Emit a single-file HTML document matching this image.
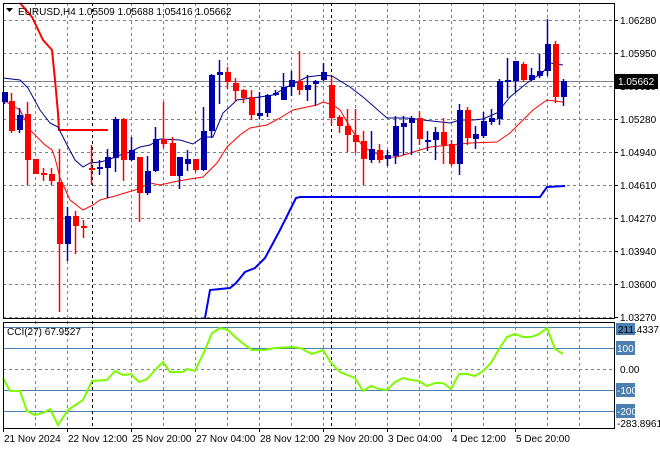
<!DOCTYPE html>
<html><head><meta charset="utf-8"><style>
html,body{margin:0;padding:0;background:#fff;width:660px;height:450px;overflow:hidden}
svg{display:block}
text{font-family:"Liberation Sans",sans-serif;font-size:10px;fill:#000}
</style></head><body>
<svg id="s" width="660" height="450" xmlns="http://www.w3.org/2000/svg">
<g id="grid" stroke="#7a8290" stroke-dasharray="3,3" stroke-width="1"></g>
<g id="lvl" stroke="#4a7fb0" stroke-width="1">
<line x1="3" y1="327.5" x2="614" y2="327.5"/><line x1="3" y1="348.5" x2="614" y2="348.5"/>
<line x1="3" y1="390.5" x2="614" y2="390.5"/><line x1="3" y1="411.5" x2="614" y2="411.5"/>
</g>
<line x1="92.5" y1="3" x2="92.5" y2="428" stroke="#000" stroke-dasharray="3,3"/>
<line x1="331.5" y1="3" x2="331.5" y2="428" stroke="#000" stroke-dasharray="3,3"/>
<line x1="3" y1="81.5" x2="614" y2="81.5" stroke="#7a8290"/>
<polyline fill="none" stroke="#f00" stroke-width="2" points="20,3 32,17 43,40 52,50 55,80 58,113 59,130 108,130"/>
<polyline fill="none" stroke="#0000ee" stroke-width="2" points="205,318 210,290 230,288 236,283 245,272 255,268 265,258 272,245 280,230 290,210 296,198 300,197 540,197 547,187 565,186"/>
<polyline fill="none" stroke="#00008b" stroke-width="1" points="3,78 20,80 28,88 40,110 50,123 58,127 66,143 75,160 83,167 90,163 100,162 108,160 120,155 130,152 140,147 150,145 160,139 180,140 193,144 203,137 213,137 223,113 237,100 260,97 273,95 287,87 307,77 323,75 332,76 350,87 363,97 387,118 407,118 423,120 450,123 460,120 473,120 483,119 497,113 510,97 527,83 543,72 550,63 563,65"/>
<polyline fill="none" stroke="#f00" stroke-width="1" points="3,100 20,110 30,130 45,145 52,150 55,158 60,178 70,200 83,210 93,205 100,200 115,196 125,193 135,190 150,183 160,185 173,182 190,179 203,177 217,163 227,147 240,135 250,128 267,125 280,118 293,110 307,107 317,105 323,102 333,105 340,110 350,127 363,147 383,157 397,157 430,147 470,143 497,142 510,133 523,120 533,110 547,100 563,102"/>
<g id="c"></g>
<polyline fill="none" stroke="#7cfc00" stroke-width="2" points="3,378 10,391 20,391 27,411 35,415 45,412 50,409 58,425 68,410 83,400 92,381 107,380 115,371 123,375 131,374 139,382 147,379 155,370 163,362 170,372 183,372 187,369 195,371 205,350 212,333 220,328 228,330 235,337 245,345 252,350 265,350 275,348 292,347 300,348 312,354 323,350 331,363 340,372 350,376 355,378 363,391 371,386 379,389 387,390 395,382 403,378 411,380 419,381 427,386 435,383 443,383 451,389 459,374 467,374 475,376 483,371 491,363 499,349 507,337 515,334 523,337 531,337 539,334 547,328 555,349 563,354"/>
<g fill="none" stroke="#000" stroke-width="1">
<rect x="3.5" y="3.5" width="611" height="315"/>
<rect x="3.5" y="322.5" width="611" height="106"/>
</g>
<path d="M6,8 L13,8 L9.5,12 Z" fill="#000"/>
<text x="18" y="15">EURUSD,H4  1.05509 1.05688 1.05416 1.05662</text>
<text x="7" y="335">CCI(27) 67.9527</text>
<g id="ax"></g>
<rect x="614" y="74" width="44" height="15" fill="#000"/>
<text x="618" y="85" style="fill:#fff">1.05662</text>
</svg>
<script>
var ns="http://www.w3.org/2000/svg";
function el(p,t,a,txt){var e=document.createElementNS(ns,t);for(var k in a)e.setAttribute(k,a[k]);if(txt)e.textContent=txt;p.appendChild(e);return e;}
var g=document.getElementById('grid');
var vx=[35,67,131,163,195,227,259,291,323,355,387,419,451,483,515,547,579];
vx.forEach(function(x){el(g,'line',{x1:x+.5,y1:3,x2:x+.5,y2:428});});
for(var y=20;y<=317;y+=33)el(g,'line',{x1:3,y1:y+.5,x2:614,y2:y+.5});
el(g,'line',{x1:3,y1:369.5,x2:614,y2:369.5});
var C=[[4,92,102,92,104,'b'],[11,101,131,93,133,'r'],[19,115,130,108,133,'b'],[27,114,160,102,185,'r'],[35,159,174,159,174,'r'],[43,173,175,168,181,'r'],[51,174,181,168,185,'r'],[59,182,244,149,312,'r'],[67,216,244,207,261,'b'],[75,216,226,211,254,'r'],[83,226,228,220,238,'r'],[91,168,170,145,185,'r'],[99,167,169,160,175,'b'],[107,157,168,149,198,'b'],[115,119,158,117,172,'b'],[123,119,160,118,181,'r'],[131,150,160,137,161,'b'],[139,157,193,157,222,'r'],[147,171,193,156,195,'b'],[155,139,171,127,172,'b'],[163,139,144,102,148,'r'],[172,143,176,137,176,'r'],[179,157,176,157,189,'b'],[187,159,164,150,171,'b'],[195,159,170,159,172,'r'],[203,131,170,107,171,'b'],[211,75,131,74,138,'b'],[219,72,75,60,104,'b'],[227,72,82,67,89,'r'],[235,83,91,78,102,'r'],[243,90,98,89,103,'r'],[251,97,115,90,120,'r'],[259,113,116,92,119,'b'],[267,95,113,94,117,'b'],[275,93,95,90,96,'b'],[283,87,100,73,100,'b'],[291,80,87,71,96,'b'],[299,81,90,51,95,'r'],[307,85,90,75,101,'b'],[315,81,84,80,106,'b'],[323,72,80,63,81,'b'],[331,85,118,77,124,'r'],[339,117,126,115,133,'r'],[347,126,135,109,152,'r'],[355,135,142,109,153,'r'],[363,141,159,131,185,'r'],[371,149,160,131,163,'b'],[379,150,160,144,163,'r'],[387,155,159,150,166,'b'],[395,126,156,116,164,'b'],[403,123,127,116,155,'b'],[411,118,123,116,155,'b'],[419,118,139,111,145,'r'],[427,140,142,131,151,'b'],[435,132,140,127,160,'b'],[443,132,145,118,164,'r'],[451,144,164,140,166,'r'],[459,110,164,104,175,'b'],[467,110,138,107,145,'r'],[475,134,139,126,149,'b'],[483,121,136,112,138,'b'],[491,118,122,109,125,'b'],[499,81,119,79,125,'b'],[507,80,82,58,98,'b'],[515,61,81,61,93,'b'],[523,64,80,62,82,'r'],[531,75,80,68,81,'b'],[539,71,76,54,78,'b'],[547,44,71,19,76,'b'],[555,44,97,41,103,'r'],[563,81,97,79,106,'b']];
var cg=document.getElementById('c');
C.forEach(function(c){var col=c[5]=='b'?'#0000a8':'#f00';
el(cg,'line',{x1:c[0]+.5,y1:c[3],x2:c[0]+.5,y2:c[4],stroke:col,'stroke-width':1.5});
el(cg,'rect',{x:c[0]-2,y:c[1],width:6,height:Math.max(2,c[2]-c[1]),fill:col});});
var ax=document.getElementById('ax');
var pl=['1.06280','1.05950','1.05610','1.05280','1.04940','1.04610','1.04270','1.03940','1.03600','1.03270'];
pl.forEach(function(t,i){var y=20+33*i;el(ax,'line',{x1:614,y1:y+.5,x2:618,y2:y+.5,stroke:'#000'});el(ax,'text',{x:620,y:y+4},t);});
[[348,'100'],[390,'-100'],[411,'-200']].forEach(function(a){el(ax,'rect',{x:616,y:a[0]-7,width:19,height:14,fill:'#4a7fb0'});el(ax,'text',{x:617,y:a[0]+4,style:'fill:#fff'},a[1]);});
el(ax,'rect',{x:616,y:323,width:19,height:12,fill:'#4a7fb0'});
el(ax,'text',{x:618,y:333},'211.4337');
el(ax,'text',{x:620,y:373},'0.00');
el(ax,'text',{x:617,y:427},'-283.8961');
var dl=[[3,'21 Nov 2024'],[67,'22 Nov 12:00'],[131,'25 Nov 20:00'],[195,'27 Nov 04:00'],[259,'28 Nov 12:00'],[323,'29 Nov 20:00'],[387,'3 Dec 04:00'],[451,'4 Dec 12:00'],[515,'5 Dec 20:00']];
dl.forEach(function(d){el(ax,'line',{x1:d[0]+.5,y1:428,x2:d[0]+.5,y2:432,stroke:'#000'});el(ax,'text',{x:d[0]+1,y:442},d[1]);});
</script>
</body></html>
